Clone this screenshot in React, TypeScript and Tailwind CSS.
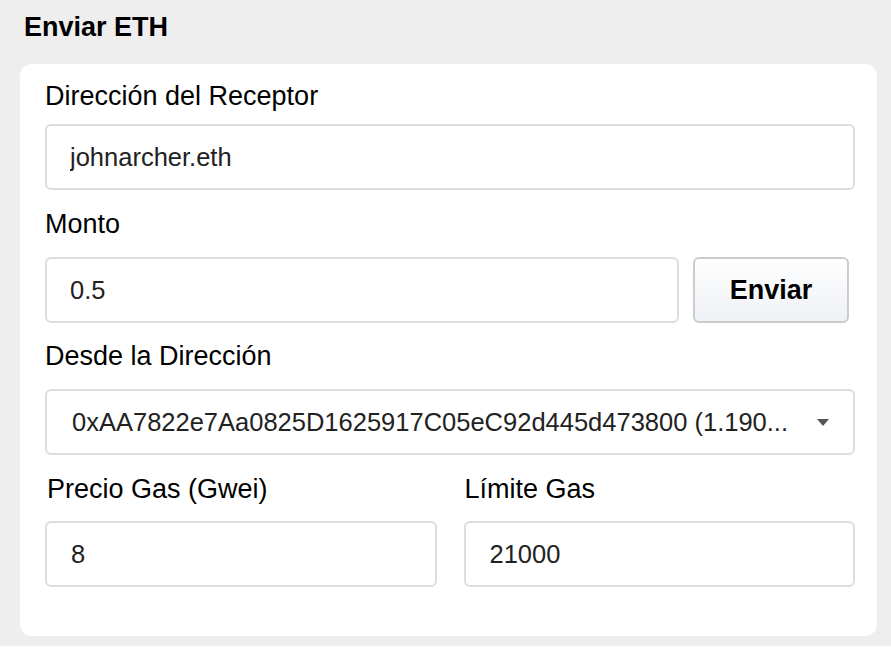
import { useState } from "react";

// Formulario "Enviar ETH": receptor, monto, cuenta de origen y parametros de gas.
const FONT = { fontFamily: '"Liberation Sans", Arial, sans-serif' };

const inputCls =
  "h-[66px] w-full rounded-[6px] border-2 border-[#dddddd] bg-white pl-[23px] text-[25.5px] text-[#222222] outline-none";

function Label({ children, className = "" }: { children: string; className?: string }) {
  return (
    <div className={`h-[31px] text-[27px] leading-[31px] text-black ${className}`}>{children}</div>
  );
}

export default function App() {
  const [to, setTo] = useState("johnarcher.eth");
  const [amount, setAmount] = useState("0.5");
  const [gasPrice, setGasPrice] = useState("8");
  const [gasLimit, setGasLimit] = useState("21000");

  return (
    <div style={FONT} className="h-[646px] w-full bg-[#eeeeee] pl-[20px] pr-[14px]">
      <h2 className="pl-[4px] pt-[12px] text-[27px] font-bold leading-[31px] text-black">
        Enviar ETH
      </h2>

      <div className="mt-[21px] rounded-[12px] bg-white pb-[49px] pl-[25px] pr-[22px] pt-[17px]">
        <Label>Dirección del Receptor</Label>
        <input
          className={`${inputCls} mt-[12px]`}
          value={to}
          onChange={(e) => setTo(e.target.value)}
        />

        <Label className="mt-[19px]">Monto</Label>
        <div className="mt-[17px] flex items-stretch pr-[6px]">
          <input
            className={`${inputCls} flex-1`}
            value={amount}
            onChange={(e) => setAmount(e.target.value)}
          />
          <button
            type="button"
            className="ml-[14px] h-[66px] w-[156px] rounded-[6px] border-2 border-[#cccccc] bg-gradient-to-b from-white to-[#eef1f5] text-[27px] font-bold text-black"
          >
            Enviar
          </button>
        </div>

        <Label className="mt-[18px]">Desde la Dirección</Label>
        <div className="mt-[17px] flex h-[66px] items-center justify-between rounded-[6px] border-2 border-[#dddddd] bg-white pl-[25px] pr-[24px]">
          <span className="whitespace-nowrap text-[25.5px] text-[#222222]">
            0xAA7822e7Aa0825D1625917C05eC92d445d473800 (1.190...
          </span>
          <svg width="12" height="7" viewBox="0 0 12 7" className="ml-[12px] shrink-0">
            <path d="M0 0h12L6 7z" fill="#555555" />
          </svg>
        </div>

        <div className="mt-[19px] grid grid-cols-2 gap-x-[27px]">
          <div>
            <Label className="pl-[2px]">Precio Gas (Gwei)</Label>
            <input
              className={`${inputCls} mt-[16px] !pl-[24px]`}
              value={gasPrice}
              onChange={(e) => setGasPrice(e.target.value)}
            />
          </div>
          <div>
            <Label className="pl-[1px]">Límite Gas</Label>
            <input
              className={`${inputCls} mt-[16px] !pl-[24px]`}
              value={gasLimit}
              onChange={(e) => setGasLimit(e.target.value)}
            />
          </div>
        </div>
      </div>
    </div>
  );
}
